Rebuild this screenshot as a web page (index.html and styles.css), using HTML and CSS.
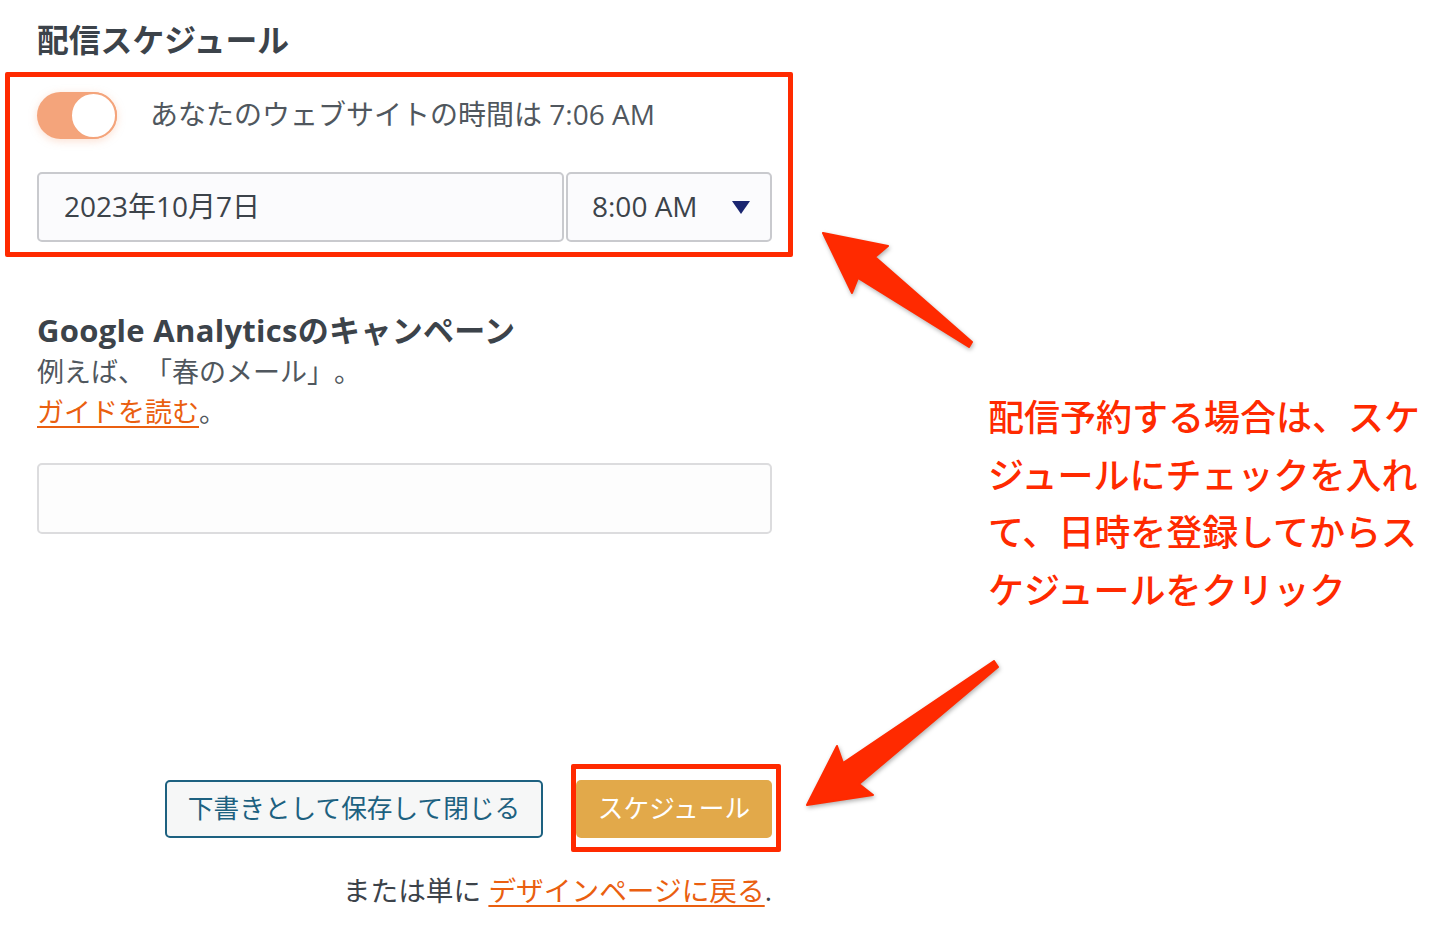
FILE: index.html
```html
<!DOCTYPE html>
<html lang="ja">
<head>
<meta charset="utf-8">
<title>配信スケジュール</title>
<link rel="stylesheet" href="styles.css">
</head>
<body>
<div class="page">
  <main class="form">
    <h2 class="title">配信スケジュール</h2>
    <div class="toggle-row">
      <span class="toggle"><span class="knob"></span></span>
      <span class="toggle-text">あなたのウェブサイトの時間は 7:06 AM</span>
    </div>
    <div class="date-row">
      <div class="field date">2023年10月7日</div>
      <div class="field time">8:00 AM<span class="caret"></span></div>
    </div>

    <h3 class="sub">Google Analyticsのキャンペーン</h3>
    <p class="help first">例えば、「春のメール」。</p>
    <p class="help"><a class="link" href="#">ガイドを読む</a>。</p>
    <div class="field campaign"></div>

    <div class="actions">
      <button class="btn draft">下書きとして保存して閉じる</button>
      <button class="btn primary">スケジュール</button>
    </div>
    <p class="back">または単に <a class="link" href="#">デザインページに戻る</a>.</p>
  </main>
  <aside class="note">配信予約する場合は、スケ<br>ジュールにチェックを入れ<br>て、日時を登録してからス<br>ケジュールをクリック</aside>

  <div class="mark mark-top"></div>
  <div class="mark mark-btn"></div>
  <svg class="arrows" width="1436" height="936" viewBox="0 0 1436 936">
    <polygon points="823,233 888,246 875,257 972,342 969,347 858,278 852,293" />
    <polygon points="807,805 837,746 843,763 994,661 998,667 859,784 873,795" />
  </svg>
</div>
</body>
</html>
```

FILE: styles.css
```css
* { box-sizing: border-box; }
html, body { margin: 0; padding: 0; background: #ffffff; }
body {
  font-family: "Open Sans", "Noto Sans CJK JP", sans-serif;
  color: #50575e;
  text-spacing-trim: space-all;
}
.page {
  position: relative;
  display: flex;
  width: 1436px;
  height: 936px;
  overflow: hidden;
}
.form {
  width: 772px;
  padding: 20px 0 0 37px;
  display: flex;
  flex-direction: column;
}
.title {
  margin: 0;
  font-size: 31.8px;
  line-height: 40px;
  font-weight: 700;
  color: #3c434a;
}
.toggle-row {
  margin-top: 31px;
  display: flex;
  align-items: center;
  gap: 33px;
  height: 48px;
}
.toggle {
  position: relative;
  display: block;
  width: 80px;
  height: 47px;
  border-radius: 24px;
  background: #f4a47b;
  box-shadow: 0 2px 8px rgba(244, 164, 123, 0.35);
  flex: none;
}
.knob {
  position: absolute;
  right: 0;
  top: 0;
  width: 47px;
  height: 47px;
  border-radius: 50%;
  background: #ffffff;
  border: 2px solid #f4a47b;
}
.toggle-text {
  font-size: 28px;
  line-height: 40px;
  color: #50575e;
  margin-top: -2px;
}
.date-row {
  margin-top: 33px;
  display: flex;
  gap: 2px;
  height: 70px;
}
.field {
  border: 2px solid #c9cace;
  border-radius: 5px;
  background: #fbfbfd;
  display: flex;
  align-items: center;
  font-size: 28px;
  line-height: 40px;
  color: #3c434a;
}
.date {
  width: 527px;
  padding: 0 0 2px 25px;
}
.time {
  width: 206px;
  padding: 0 20px 2px 24px;
  justify-content: space-between;
}
.caret {
  width: 0;
  height: 0;
  border-left: 9.5px solid transparent;
  border-right: 9.5px solid transparent;
  border-top: 13px solid #1a2570;
  margin-top: 2px;
}
.sub {
  margin: 70px 0 0;
  font-size: 31px;
  line-height: 36px;
  font-weight: 700;
  letter-spacing: 0.3px;
  color: #3c434a;
}
.help {
  margin: 0;
  font-size: 27px;
  line-height: 40px;
  color: #50575e;
}
.help.first { margin-top: 4px; }
.link {
  color: #ea5f10;
  text-decoration: underline;
  text-underline-offset: 4px;
  text-decoration-thickness: 2px;
}
.campaign {
  margin-top: 31px;
  height: 71px;
  flex: none;
  background: #fdfdfd;
  border-color: #dcdcde;
}
.actions {
  margin-top: 246px;
  display: flex;
  justify-content: flex-end;
  gap: 33px;
}
.btn {
  height: 58px;
  border-radius: 5px;
  font-family: "Open Sans", "Noto Sans CJK JP", sans-serif;
  font-size: 25.7px;
  line-height: 1;
  cursor: pointer;
  padding: 0;
}
.draft {
  width: 378px;
  background: #f6f7f7;
  border: 2px solid #1d6180;
  color: #1d6180;
}
.primary {
  width: 196px;
  background: #e2a94a;
  border: none;
  color: #ffffff;
}
.back {
  margin: 36px 0 0;
  text-align: right;
  font-size: 27.7px;
  line-height: 32px;
  color: #3c434a;
}
.note {
  margin-left: 216px;
  padding-top: 389px;
  font-size: 36px;
  line-height: 57.5px;
  font-weight: 500;
  color: #ff2a00;
  white-space: nowrap;
}
.mark {
  position: absolute;
  border: 5px solid #ff2a00;
  border-radius: 2px;
}
.mark-top { left: 5px; top: 72px; width: 788px; height: 185px; }
.mark-btn { left: 571px; top: 764px; width: 210px; height: 88px; }
.arrows {
  position: absolute;
  left: 0;
  top: 0;
  pointer-events: none;
}
.arrows polygon {
  fill: #ff2a00;
  stroke: #ff2a00;
  stroke-width: 2;
  stroke-linejoin: round;
  filter: drop-shadow(1px 2px 2px rgba(0, 0, 0, 0.3));
}
```
